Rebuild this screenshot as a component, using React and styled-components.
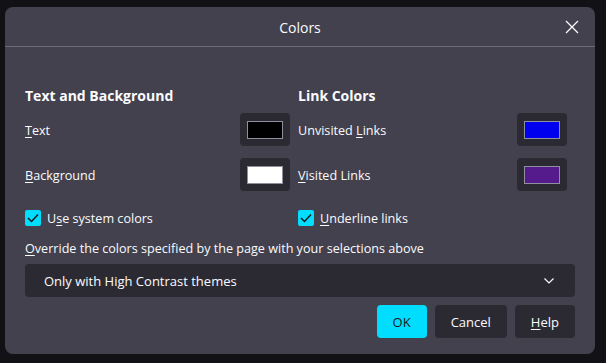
import React from 'react';
import styled, { createGlobalStyle } from 'styled-components';

const Global = createGlobalStyle`
  html, body { margin: 0; padding: 0; }
  body {
    background: #121116;
    font-family: "Open Sans", "Noto Sans", sans-serif;
    color: #fbfbfe;
    width: 606px;
    height: 363px;
    overflow: hidden;
  }
`;

const Dialog = styled.div`
  margin: 7px 11px 0 5px;
  width: 590px;
  height: 347px;
  background: #42414d;
  border-radius: 8px;
  display: flex;
  flex-direction: column;
  box-sizing: border-box;
`;

const Header = styled.div`
  height: 40px;
  border-bottom: 1px solid #6b6a75;
  display: flex;
  align-items: center;
  justify-content: center;
  position: relative;
  font-size: 14px;
  padding-top: 1px;
  box-sizing: border-box;
`;

const Close = styled.button`
  position: absolute;
  right: 14px;
  top: 11px;
  width: 18px;
  height: 18px;
  padding: 0;
  border: none;
  background: none;
  display: flex;
  align-items: center;
  justify-content: center;
`;

const Body = styled.div`
  padding: 41px 20px 0 20px;
  display: flex;
  flex-direction: column;
`;

const Columns = styled.div`
  display: grid;
  grid-template-columns: 265px 269px;
  column-gap: 8px;
`;

const Column = styled.div`
  display: flex;
  flex-direction: column;
`;

const Heading = styled.div`
  font-size: 14px;
  font-weight: 700;
  height: 16px;
  line-height: 16px;
  margin-bottom: 9px;
`;

const Row = styled.div`
  display: flex;
  align-items: center;
  justify-content: space-between;
  height: 33px;
  margin-bottom: 12px;
  font-size: 12.6px;
  & > span { padding-top: 2px; }
`;

const SwatchButton = styled.div`
  width: 50px;
  height: 33px;
  border-radius: 4px;
  background: #2b2a33;
  display: flex;
  align-items: center;
  justify-content: center;
`;

const Swatch = styled.div`
  width: 34px;
  height: 16px;
  border: 1px solid #8f8f9d;
  background: ${p => p.color};
`;

const CheckRow = styled.label`
  display: flex;
  align-items: center;
  gap: 6px;
  font-size: 12.6px;
  height: 20px;
  margin-top: 5px;
`;

const Box = styled.span`
  width: 16px;
  height: 16px;
  border-radius: 2px;
  background: #00ddff;
  display: flex;
  align-items: center;
  justify-content: center;
`;

const Label = styled.div`
  font-size: 12.6px;
  margin-top: 11px;
  height: 20px;
  line-height: 20px;
`;

const Select = styled.div`
  margin-top: 5px;
  height: 33px;
  border-radius: 4px;
  background: #2b2a33;
  display: flex;
  align-items: center;
  justify-content: space-between;
  padding: 0 20px 0 19px;
  font-size: 13px;
`;

const Buttons = styled.div`
  display: flex;
  justify-content: flex-end;
  gap: 8px;
  margin-top: 8px;
`;

const Button = styled.div`
  height: 33px;
  border-radius: 4px;
  padding: 0 ${p => p.$pad || 16}px;
  min-width: ${p => p.$min || 0}px;
  box-sizing: border-box;
  display: flex;
  align-items: center;
  justify-content: center;
  font-size: 13px;
  background: ${p => (p.$primary ? '#00ddff' : '#2b2a33')};
  color: ${p => (p.$primary ? '#15141a' : '#fbfbfe')};
`;

const U = styled.span`
  text-decoration: underline;
  text-underline-offset: 2px;
`;

const Check = () => (
  <Box>
    <svg width="12" height="10" viewBox="0 0 12 10">
      <path d="M1 5 L4.5 8.5 L11 1.5" fill="none" stroke="#15141a" strokeWidth="1.5" />
    </svg>
  </Box>
);

export default function App() {
  return (
    <>
      <Global />
      <Dialog>
        <Header>
          Colors
          <Close>
            <svg width="16" height="16" viewBox="0 0 16 16">
              <path d="M2 2 L14 14 M14 2 L2 14" stroke="#fbfbfe" strokeWidth="1.3" />
            </svg>
          </Close>
        </Header>
        <Body>
          <Columns>
            <Column>
              <Heading>Text and Background</Heading>
              <Row>
                <span><U>T</U>ext</span>
                <SwatchButton><Swatch color="#000000" /></SwatchButton>
              </Row>
              <Row>
                <span><U>B</U>ackground</span>
                <SwatchButton><Swatch color="#ffffff" /></SwatchButton>
              </Row>
              <CheckRow>
                <Check />
                <span>U<U>s</U>e system colors</span>
              </CheckRow>
            </Column>
            <Column>
              <Heading>Link Colors</Heading>
              <Row>
                <span>Unvisited <U>L</U>inks</span>
                <SwatchButton><Swatch color="#0000ee" /></SwatchButton>
              </Row>
              <Row>
                <span><U>V</U>isited Links</span>
                <SwatchButton><Swatch color="#551a8b" /></SwatchButton>
              </Row>
              <CheckRow>
                <Check />
                <span><U>U</U>nderline links</span>
              </CheckRow>
            </Column>
          </Columns>
          <Label><U>O</U>verride the colors specified by the page with your selections above</Label>
          <Select>
            <span>Only with High Contrast themes</span>
            <svg width="12" height="8" viewBox="0 0 12 8">
              <path d="M1.5 1.5 L6 6 L10.5 1.5" fill="none" stroke="#fbfbfe" strokeWidth="1.2" />
            </svg>
          </Select>
          <Buttons>
            <Button $primary $min={50}>OK</Button>
            <Button $min={71}>Cancel</Button>
            <Button $min={60}><span><U>H</U>elp</span></Button>
          </Buttons>
        </Body>
      </Dialog>
    </>
  );
}
